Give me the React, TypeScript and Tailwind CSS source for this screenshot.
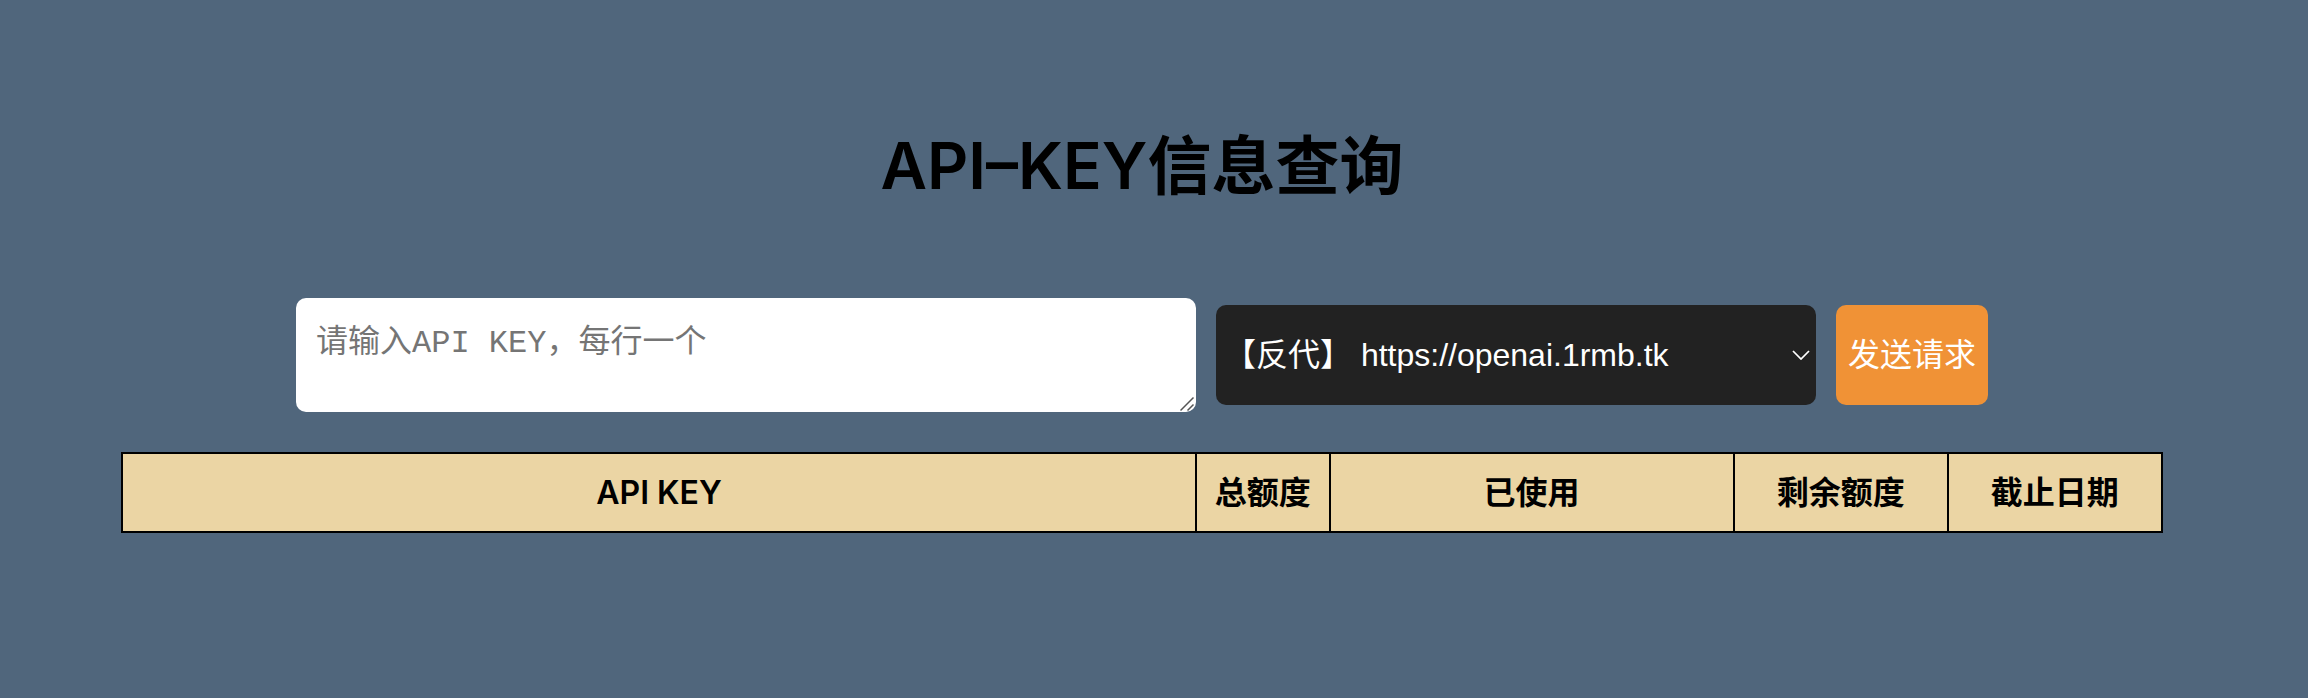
import { useState } from "react";

const columns = [
  { label: "API KEY", width: "w-[52.65%]" },
  { label: "总额度", width: "w-[6.55%]" },
  { label: "已使用", width: "w-[19.8%]" },
  { label: "剩余额度", width: "w-[10.5%]" },
  { label: "截止日期", width: "w-[10.5%]" },
];

const endpoints = ["https://openai.1rmb.tk"];

export default function App() {
  const [keys, setKeys] = useState("");

  return (
    <div className="min-h-screen bg-[#50667c] pt-[118px] pr-6 pb-16 text-black">
      <main className="mx-auto w-[89.4%] font-['Inter','Noto_Sans_CJK_SC',sans-serif]">
        <h1 className="text-center text-[64px] leading-[96px] font-semibold">API–KEY信息查询</h1>

        <form
          className="mt-[84px] flex flex-wrap items-center justify-center gap-5"
          onSubmit={(event) => event.preventDefault()}
        >
          <div className="relative">
            <textarea
              aria-label="API KEY"
              placeholder="请输入API KEY，每行一个"
              value={keys}
              onChange={(event) => setKeys(event.target.value)}
              className="block h-[114px] w-[900px] resize overflow-auto rounded-[10px] bg-white p-5 font-['Liberation_Mono','Noto_Sans_CJK_SC',monospace] text-[32px] leading-[52px] text-black outline-none placeholder:text-[#757575] [&::-webkit-resizer]:bg-transparent"
            />
            <svg
              className="pointer-events-none absolute right-0 bottom-0 size-4"
              viewBox="0 0 16 16"
              fill="none"
              stroke="#555"
              strokeWidth="1.5"
              aria-hidden="true"
            >
              <path d="M0.5 14.5 13.5 1.5M7.5 14.5 13.5 8.5" />
            </svg>
          </div>

          <div className="relative">
            <select
              aria-label="接口地址"
              className="block h-[100px] w-[600px] appearance-none rounded-[10px] bg-[#222] pr-8 pl-2 font-['Liberation_Sans','Noto_Sans_CJK_SC',sans-serif] text-[32px] text-white outline-none"
            >
              {endpoints.map((url) => (
                <option key={url} value={url}>
                  【反代】 {url}
                </option>
              ))}
            </select>
            <svg
              className="pointer-events-none absolute inset-y-0 right-[6px] my-auto h-[10px] w-[18px]"
              viewBox="0 0 18 10"
              fill="none"
              stroke="white"
              strokeWidth="1.75"
              aria-hidden="true"
            >
              <path d="M1 1 9 9 17 1" />
            </svg>
          </div>

          <button
            type="submit"
            className="h-[100px] rounded-[10px] bg-[#f09236] px-3 font-['Liberation_Sans','Noto_Sans_CJK_SC',sans-serif] text-[32px] text-white"
          >
            发送请求
          </button>
        </form>

        <table className="mt-10 w-full table-fixed border-collapse bg-[#ebd5a4]">
          <thead>
            <tr>
              {columns.map((column) => (
                <th
                  key={column.label}
                  scope="col"
                  className={`${column.width} h-[79px] border-2 border-black text-center text-[32px] leading-[48px] font-semibold whitespace-nowrap`}
                >
                  {column.label}
                </th>
              ))}
            </tr>
          </thead>
          <tbody />
        </table>
      </main>
    </div>
  );
}
